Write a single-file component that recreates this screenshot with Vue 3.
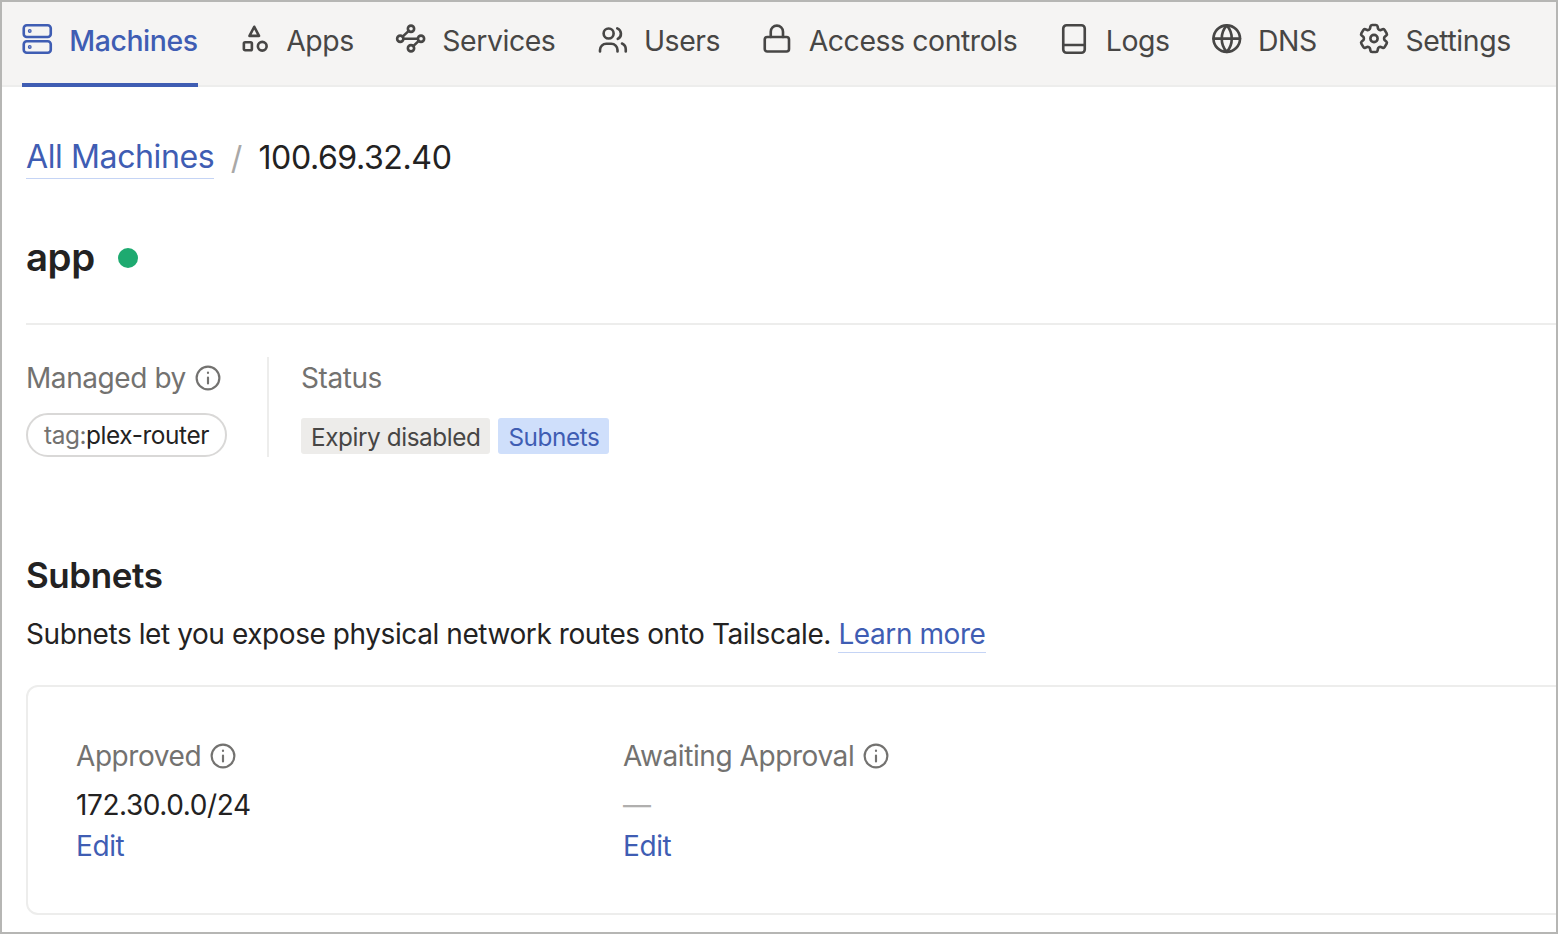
<script setup>
const navItems = [
  { label: 'Machines', icon: 'machines', active: true },
  { label: 'Apps', icon: 'apps' },
  { label: 'Services', icon: 'services' },
  { label: 'Users', icon: 'users' },
  { label: 'Access controls', icon: 'lock' },
  { label: 'Logs', icon: 'book' },
  { label: 'DNS', icon: 'globe' },
  { label: 'Settings', icon: 'gear' },
]
</script>

<template>
  <div class="frame">
    <nav class="nav">
      <a v-for="item in navItems" :key="item.label" class="tab" :class="{ active: item.active }">
        <svg class="tab-icon" viewBox="0 0 24 24" fill="none" stroke="currentColor" stroke-width="2.1" stroke-linecap="round" stroke-linejoin="round">
          <template v-if="item.icon === 'machines'">
            <rect x="1.4" y="1" width="21.6" height="9.4" rx="2.4" />
            <rect x="1.4" y="13.8" width="21.6" height="9.2" rx="2.4" />
            <circle cx="6.2" cy="5.6" r=".5" fill="currentColor" />
            <circle cx="6.2" cy="18.4" r=".5" fill="currentColor" />
          </template>
          <template v-else-if="item.icon === 'apps'">
            <path d="M12.2 2.2 16 9.5H8.4Z" />
            <rect x="3.9" y="14.6" width="6.4" height="6.4" rx="1" />
            <circle cx="18.6" cy="17.8" r="3.5" />
          </template>
          <template v-else-if="item.icon === 'services'">
            <circle cx="12.8" cy="3.8" r="2.5" />
            <circle cx="4.2" cy="11.8" r="2.5" />
            <circle cx="20.8" cy="11.8" r="2.5" />
            <circle cx="12.8" cy="19.4" r="2.5" />
            <path d="M6.7 11.8h11.6M6.1 10.1l4.9-4.6M19 13.5l-4.4 4.2" />
          </template>
          <template v-else-if="item.icon === 'users'">
            <circle cx="9.3" cy="7.6" r="4" />
            <path d="M2.4 22v-1.2a5 5 0 0 1 5-5h4a5 5 0 0 1 5 5V22" />
            <path d="M16.2 3.5a4.6 4.6 0 0 1 .4 8.4M20 15.6a5 5 0 0 1 3 4.6V22" />
          </template>
          <template v-else-if="item.icon === 'lock'">
            <rect x="3" y="10.4" width="19.4" height="11.6" rx="2" />
            <path d="M7.8 10.4V6.2a4.9 4.9 0 0 1 9.8 0v4.2" />
          </template>
          <template v-else-if="item.icon === 'book'">
            <rect x="4.2" y="1" width="17.2" height="22" rx="2.6" />
            <path d="M4.2 16.8h17.2" />
          </template>
          <template v-else-if="item.icon === 'globe'">
            <circle cx="12.6" cy="11.7" r="10.6" />
            <path d="M2 11.7h21.2M12.6 1.1a16 16 0 0 1 0 21.2a16 16 0 0 1 0-21.2z" />
          </template>
          <template v-else>
            <circle cx="12.8" cy="11.6" r="2.9" />
            <path transform="translate(12.8 11.6) scale(1.2) translate(-12 -12)" stroke-width="1.75" d="M9.594 3.94c.09-.542.56-.94 1.11-.94h2.593c.55 0 1.02.398 1.11.94l.213 1.281c.063.374.313.686.645.87.074.04.147.083.22.127.325.196.72.257 1.075.124l1.217-.456a1.125 1.125 0 0 1 1.37.49l1.296 2.247a1.125 1.125 0 0 1-.26 1.431l-1.003.827c-.293.241-.438.613-.43.992a7.723 7.723 0 0 1 0 .255c-.008.378.137.75.43.991l1.004.827c.424.35.534.955.26 1.43l-1.298 2.247a1.125 1.125 0 0 1-1.369.491l-1.217-.456c-.355-.133-.75-.072-1.076.124a6.47 6.47 0 0 1-.22.128c-.331.183-.581.495-.644.869l-.213 1.281c-.09.543-.56.94-1.11.94h-2.594c-.55 0-1.019-.398-1.11-.94l-.213-1.281c-.062-.374-.312-.686-.644-.87a6.52 6.52 0 0 1-.22-.127c-.325-.196-.72-.257-1.076-.124l-1.217.456a1.125 1.125 0 0 1-1.369-.49l-1.297-2.247a1.125 1.125 0 0 1 .26-1.431l1.004-.827c.292-.24.437-.613.43-.991a6.932 6.932 0 0 1 0-.255c.007-.38-.138-.751-.43-.992l-1.004-.827a1.125 1.125 0 0 1-.26-1.43l1.297-2.247a1.125 1.125 0 0 1 1.37-.491l1.216.456c.356.133.751.072 1.076-.124.072-.044.146-.086.22-.128.332-.183.582-.495.644-.869l.214-1.28Z" />
          </template>
        </svg>
        <span>{{ item.label }}</span>
      </a>
    </nav>

    <main class="page">
      <div class="crumbs">
        <a class="link">All Machines</a>
        <span class="slash">/</span>
        <span>100.69.32.40</span>
      </div>

      <div class="title-row">
        <h1>app</h1>
        <span class="dot"></span>
      </div>

      <div class="meta">
        <div class="meta-col owner">
          <div class="label">Managed by
            <svg class="info" viewBox="0 0 24 24" fill="none" stroke="currentColor" stroke-width="2" stroke-linecap="round"><circle cx="12" cy="12" r="10.5" /><path d="M12 11.5v5.5M12 7v.4" /></svg>
          </div>
          <span class="pill"><span class="muted">tag:</span>plex-router</span>
        </div>
        <div class="meta-col status">
          <div class="label">Status</div>
          <div class="badges">
            <span class="badge grey">Expiry disabled</span>
            <span class="badge blue">Subnets</span>
          </div>
        </div>
      </div>

      <h2>Subnets</h2>
      <p class="desc">Subnets let you expose physical network routes onto Tailscale. <a class="link">Learn more</a></p>

      <section class="card">
        <div class="col">
          <div class="label">Approved
            <svg class="info" viewBox="0 0 24 24" fill="none" stroke="currentColor" stroke-width="2" stroke-linecap="round"><circle cx="12" cy="12" r="10.5" /><path d="M12 11.5v5.5M12 7v.4" /></svg>
          </div>
          <div class="value">172.30.0.0/24</div>
          <a class="edit">Edit</a>
        </div>
        <div class="col">
          <div class="label">Awaiting Approval
            <svg class="info" viewBox="0 0 24 24" fill="none" stroke="currentColor" stroke-width="2" stroke-linecap="round"><circle cx="12" cy="12" r="10.5" /><path d="M12 11.5v5.5M12 7v.4" /></svg>
          </div>
          <div class="value dash">—</div>
          <a class="edit">Edit</a>
        </div>
      </section>
    </main>
  </div>
</template>

<style>
html, body { margin: 0; background: #fff; }
</style>

<style scoped>
.frame {
  box-sizing: border-box;
  width: 1558px;
  height: 934px;
  border: 2px solid #b6b6b4;
  overflow: hidden;
  background: #fff;
  font-family: Inter, "Liberation Sans", sans-serif;
  color: #232222;
  font-size: 28px;
  letter-spacing: -0.015em;
}
.nav {
  display: flex;
  height: 85px;
  box-sizing: border-box;
  padding-left: 20px;
  gap: 41.2px;
  background: #f5f4f3;
  border-bottom: 2px solid #ededec;
  font-size: 28.4px;
}
.tab {
  display: flex;
  align-items: center;
  gap: 17.3px;
  height: 85px;
  box-sizing: border-box;
  padding-bottom: 5px;
  border-bottom: 4px solid transparent;
  color: #474645;
  white-space: nowrap;
}
.tab.active {
  color: #3f5db3;
  font-weight: 550;
  border-bottom-color: #3f5db3;
}
.tab-icon { width: 30px; height: 30px; flex: none; margin-top: -3px; overflow: visible; }
.page { padding: 0 0 0 24px; }
.crumbs {
  display: flex;
  align-items: center;
  height: 44px;
  margin-top: 48px;
  font-size: 32.1px;
}
.link {
  color: #3f5db3;
  border-bottom: 1px solid #c5d4f5;
  padding-bottom: 1px;
}
.crumbs .link { line-height: 43px; padding-bottom: 0; }
.slash { margin: 0 16.5px; color: #a9a8a7; }
.title-row {
  display: flex;
  align-items: center;
  gap: 23px;
  margin-top: 56px;
  height: 44px;
}
h1 {
  margin: 0;
  font-size: 38.4px;
  font-weight: 600;
  line-height: 44px;
}
.dot {
  width: 20px;
  height: 20px;
  margin-top: 2px;
  border-radius: 50%;
  background: #1eaa70;
}
.meta {
  display: flex;
  margin-top: 44px;
  padding-top: 32px;
  border-top: 2px solid #ededec;
}
.meta-col { height: 100px; }
.meta .label { line-height: 42px; }
.owner {
  width: 241px;
  border-right: 2px solid #ededec;
}
.status { padding-left: 32px; }
.label {
  display: flex;
  align-items: center;
  gap: 9px;
  color: #737270;
  line-height: 44px;
}
.info { width: 26px; height: 26px; flex: none; }
.pill {
  display: inline-block;
  box-sizing: border-box;
  height: 44px;
  margin-top: 14px;
  padding: 0 16px;
  border: 2px solid #d9d8d7;
  border-radius: 22px;
  font-size: 24.4px;
  line-height: 40px;
}
.muted { color: #737270; }
.badges {
  display: flex;
  gap: 8px;
  margin-top: 19px;
}
.badge {
  height: 36px;
  padding: 0 10px;
  border-radius: 3px;
  font-size: 24.3px;
  line-height: 38px;
}
.grey { background: #edecea; color: #474645; }
.blue { background: #cfdffb; color: #3f5db3; }
h2 {
  margin: 96px 0 0;
  font-size: 35px;
  font-weight: 600;
  line-height: 44px;
}
.desc {
  margin: 15px 0 0;
  line-height: 44px;
}
.card {
  display: flex;
  box-sizing: border-box;
  width: 1560px;
  height: 230px;
  margin-top: 29px;
  padding: 47px 48px;
  border: 2px solid #ededec;
  border-radius: 12px;
}
.col { width: 547px; }
.value { line-height: 44px; margin-top: 5px; }
.dash { color: #b0afae; }
.edit { display: block; color: #3f5db3; line-height: 38px; }
</style>
